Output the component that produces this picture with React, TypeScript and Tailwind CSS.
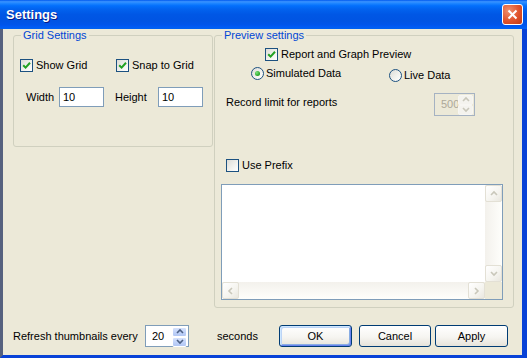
import clsx from "clsx";

const arrows = {
  up: "1,5 4,2 7,5",
  down: "1,2 4,5 7,2",
  left: "5,1 2,4 5,7",
  right: "2,1 5,4 2,7",
};

function Arrow({ dir, color }: { dir: keyof typeof arrows; color: string }) {
  return (
    <svg width="8" height="8" viewBox="0 0 8 8">
      <polyline points={arrows[dir]} fill="none" stroke={color} strokeWidth="1.6" />
    </svg>
  );
}

function CheckBox({ checked = false, label }: { checked?: boolean; label: string }) {
  return (
    <label className="flex items-center gap-[3px] leading-[13px]">
      <span className="flex h-[13px] w-[13px] shrink-0 items-center justify-center border border-[#1C5180] bg-[linear-gradient(135deg,#DCDCD7_0%,#F3F3EF_60%,#FFFFFF_100%)]">
        {checked && (
          <svg width="9" height="9" viewBox="0 0 9 9">
            <path d="M1.2 4.2 L3.6 6.6 L8 1.8" fill="none" stroke="#21A121" strokeWidth="2" />
          </svg>
        )}
      </span>
      <span>{label}</span>
    </label>
  );
}

function Radio({ checked = false, label }: { checked?: boolean; label: string }) {
  return (
    <label className="flex items-center gap-[2px] leading-[13px]">
      <span className="flex h-[13px] w-[13px] shrink-0 items-center justify-center rounded-full border border-[#1C5180] bg-[linear-gradient(135deg,#DCDCD7_0%,#F3F3EF_60%,#FFFFFF_100%)]">
        {checked && (
          <span className="h-[5px] w-[5px] rounded-full bg-[radial-gradient(circle_at_35%_35%,#7CE37C,#21A121_70%)]" />
        )}
      </span>
      <span>{label}</span>
    </label>
  );
}

function TextInput({ value }: { value: string }) {
  return (
    <div className="flex h-[20px] w-[45px] items-center border border-[#7F9DB9] bg-white pl-[3px]">
      {value}
    </div>
  );
}

function SpinButton({ dir, disabled }: { dir: "up" | "down"; disabled: boolean }) {
  return (
    <div
      className={clsx(
        "flex flex-1 items-center justify-center rounded-[2px] border",
        disabled
          ? "border-[#F7F6F2] bg-[#F4F3EE]"
          : "border-white bg-[linear-gradient(180deg,#D6E2FC_0%,#C1D3F9_50%,#B2C7F4_100%)]"
      )}
    >
      <Arrow dir={dir} color={disabled ? "#C9C7BA" : "#4D6185"} />
    </div>
  );
}

function SpinBox({
  value,
  disabled = false,
  className,
}: {
  value: string;
  disabled?: boolean;
  className: string;
}) {
  return (
    <div
      className={clsx(
        "flex border p-px",
        disabled ? "border-[#A5B2C2] bg-[#ECE9D8] text-[#ACA899]" : "border-[#7F9DB9] bg-white",
        className
      )}
    >
      <div className="flex min-w-0 flex-1 items-center overflow-hidden whitespace-nowrap pl-[5px]">{value}</div>
      <div className="flex w-[15px] shrink-0 flex-col">
        <SpinButton dir="up" disabled={disabled} />
        <SpinButton dir="down" disabled={disabled} />
      </div>
    </div>
  );
}

function ScrollButton({ dir }: { dir: keyof typeof arrows }) {
  return (
    <div className="flex h-[17px] w-[17px] shrink-0 items-center justify-center rounded-[2px] border border-[#E3E0D5] bg-[linear-gradient(135deg,#FFFFFF_0%,#F5F4EF_60%,#E9E7DF_100%)]">
      <Arrow dir={dir} color="#C9C7BA" />
    </div>
  );
}

function TextBox() {
  return (
    <div className="ml-[6px] mt-[12px] flex h-[116px] w-[282px] flex-col border border-[#7F9DB9] bg-white">
      <div className="flex min-h-0 flex-1">
        <div className="flex-1" />
        <div className="flex w-[17px] flex-col justify-between bg-[linear-gradient(90deg,#F3F1EC,#FEFEFB)]">
          <ScrollButton dir="up" />
          <ScrollButton dir="down" />
        </div>
      </div>
      <div className="flex h-[17px]">
        <div className="flex flex-1 justify-between bg-[linear-gradient(180deg,#F3F1EC,#FEFEFB)]">
          <ScrollButton dir="left" />
          <ScrollButton dir="right" />
        </div>
        <div className="w-[17px] bg-[#ECE9D8]" />
      </div>
    </div>
  );
}

function Button({ label, primary = false }: { label: string; primary?: boolean }) {
  return (
    <button
      className={clsx(
        "flex h-[22px] w-full items-center justify-center rounded-[3px] border border-[#003C74] bg-[linear-gradient(180deg,#FFFFFF_0%,#F6F5F1_55%,#E6E3DA_100%)]",
        primary &&
          "shadow-[inset_1px_1px_0_#CEE7FF,inset_-1px_-1px_0_#6982EE,inset_2px_2px_0_#BCD4F6,inset_-2px_-2px_0_#89ADE4]"
      )}
    >
      {label}
    </button>
  );
}

export default function App() {
  return (
    <div className="h-[360px] w-[527px] bg-white font-['Liberation_Sans',Arial,sans-serif] text-[11px] text-black">
      <div className="flex h-[358px] flex-col overflow-hidden">
        {/* Title bar */}
        <div className="flex h-[29px] shrink-0 items-center justify-between bg-[linear-gradient(180deg,#0058EE_0%,#3A93FF_6%,#1C84FF_12%,#036FFC_20%,#0262EE_32%,#0057E5_50%,#0054E3_72%,#0055EB_86%,#005BF5_93%,#0062EF_100%)] pl-[6px] pr-[4px]">
          <span className="text-[13px] font-bold text-white [text-shadow:1px_1px_0_#0A1883]">Settings</span>
          <div className="flex h-[21px] w-[21px] items-center justify-center rounded-[3px] border border-white bg-[radial-gradient(circle_at_30%_30%,#F0906E,#E0532C_55%,#C23A14_100%)]">
            <svg width="11" height="11" viewBox="0 0 11 11">
              <path d="M1.5 1.5 L9.5 9.5 M9.5 1.5 L1.5 9.5" stroke="white" strokeWidth="2" />
            </svg>
          </div>
        </div>

        {/* Body */}
        <div className="flex flex-1 flex-col border-b-[3px] border-l-[3px] border-r-[5px] border-b-[#0842D7] border-l-[#56617E] border-r-[#0842D7] bg-[#ECE9D8]">
          <div className="flex items-start">
            <fieldset className="ml-[10px] h-[118px] w-[200px] rounded-[3px] border border-[#D0D0BF] p-0">
              <legend className="ml-[7px] px-[2px] leading-[12px] text-[#0046D5]">Grid Settings</legend>
              <div className="mt-[18px] flex pl-[6px]">
                <div className="w-[96px]">
                  <CheckBox checked label="Show Grid" />
                </div>
                <CheckBox checked label="Snap to Grid" />
              </div>
              <div className="mt-[15px] flex items-center pl-[12px]">
                <span className="w-[33px]">Width</span>
                <TextInput value="10" />
                <span className="ml-[11px] w-[43px]">Height</span>
                <TextInput value="10" />
              </div>
            </fieldset>

            <fieldset className="ml-px h-[279px] w-[300px] rounded-[3px] border border-[#D0D0BF] p-0">
              <legend className="ml-[7px] px-[2px] leading-[12px] text-[#0046D5]">Preview settings</legend>
              <div className="mt-[7px] pl-[50px]">
                <CheckBox checked label="Report and Graph Preview" />
              </div>
              <div className="mt-[6px] flex items-start pl-[36px]">
                <div className="w-[138px]">
                  <Radio checked label="Simulated Data" />
                </div>
                <div className="mt-[2px]">
                  <Radio label="Live Data" />
                </div>
              </div>
              <div className="mt-[11px] flex items-start pl-[11px]">
                <span className="mt-[3px] w-[208px] leading-[13px]">Record limit for reports</span>
                <SpinBox value="500" disabled className="h-[23px] w-[41px]" />
              </div>
              <div className="mt-[43px] pl-[11px]">
                <CheckBox label="Use Prefix" />
              </div>
              <TextBox />
            </fieldset>
          </div>

          <div className="mt-[17px] flex h-[22px] items-center pl-[10px]">
            <span className="w-[132px]">Refresh thumbnails every</span>
            <SpinBox value="20" className="h-[22px] w-[44px]" />
            <span className="ml-[28px] w-[62px]">seconds</span>
            <div className="flex items-center">
              <div className="w-[73px]">
                <Button primary label="OK" />
              </div>
              <div className="ml-[7px] w-[72px]">
                <Button label="Cancel" />
              </div>
              <div className="ml-[4px] w-[73px]">
                <Button label="Apply" />
              </div>
            </div>
          </div>
        </div>
      </div>
    </div>
  );
}
